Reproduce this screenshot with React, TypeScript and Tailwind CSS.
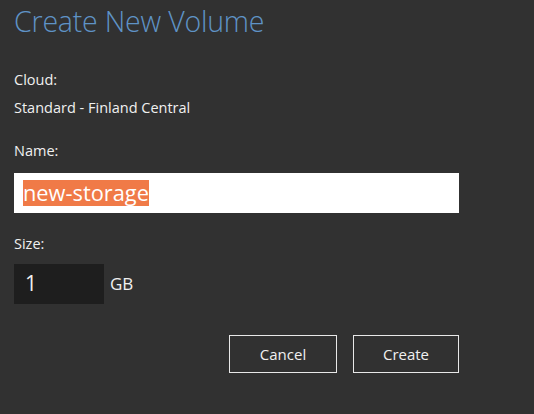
export default function App() {
  return (
    <div
      className="w-[534px] h-[414px] bg-[#313131] text-[#f0f0f0] px-[14px] pt-[2px] overflow-hidden"
      style={{ fontFamily: '"Open Sans", "Noto Sans", sans-serif' }}
    >
      <h1 className="text-[28.5px] font-light leading-[38px] text-[#5f93c6] tracking-[-0.2px]">Create New Volume</h1>

      <div className="mt-[30px] text-[14.5px] leading-[20px]">Cloud:</div>
      <div className="mt-[8px] text-[14.5px] leading-[20px]">Standard - Finland Central</div>

      <div className="mt-[23px] text-[14.5px] leading-[20px]">Name:</div>
      <div className="mt-[12px] w-[445px] h-[40px] bg-white flex items-center px-[9px]">
        <span className="bg-[#f07a47] text-white text-[21.8px] leading-[26px]">new-storage</span>
      </div>

      <div className="mt-[21px] text-[14.5px] leading-[20px]">Size:</div>
      <div className="mt-[10px] flex items-center">
        <div className="w-[90px] h-[40px] bg-[#1e1e1e] flex items-center px-[11px] text-[21px]">1</div>
        <span className="ml-[6px] text-[17px]">GB</span>
      </div>

      <div className="mt-[31px] flex justify-end gap-[16px] w-[445px]">
        <button className="w-[108px] h-[38px] border border-[#e8e8e8] text-[15px]">Cancel</button>
        <button className="w-[106px] h-[38px] border border-[#e8e8e8] text-[15px]">Create</button>
      </div>
    </div>
  );
}
